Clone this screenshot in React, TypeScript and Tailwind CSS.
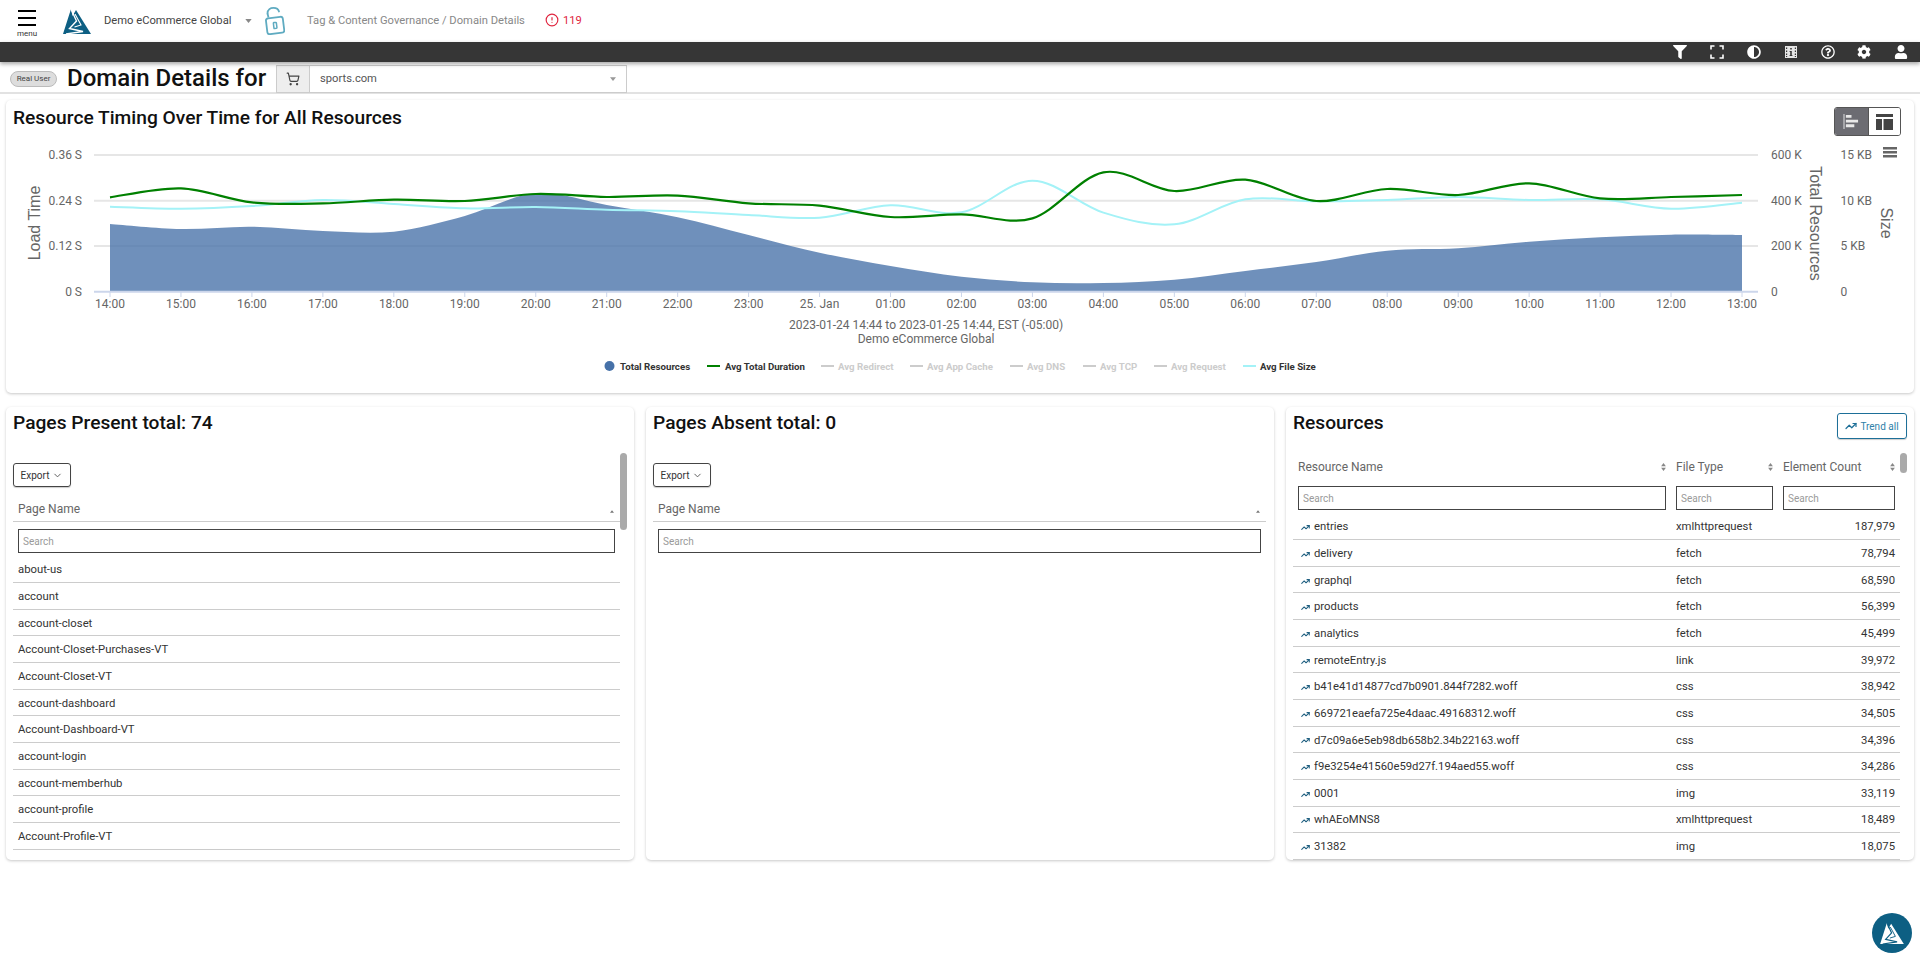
import React from "react";
import { ChevronDown, CircleAlert, ShoppingCart, TrendingUp } from "lucide-react";
import { FaFilter, FaRegQuestionCircle, FaCog, FaUser, FaAdjust } from "react-icons/fa";

const hx = (i: number) => 110 + (1632 * i) / 23;
const hy = (z: number) => 130 + z / 3;

function spline(zs: number[]) {
  const p = zs.map((z, i) => [hx(i), hy(z)]);
  let d = `M${p[0][0]} ${p[0][1]}`;
  for (let i = 0; i < p.length - 1; i++) {
    const a = p[Math.max(0, i - 1)];
    const b = p[i];
    const c = p[i + 1];
    const e = p[Math.min(p.length - 1, i + 2)];
    const k = 6;
    d += ` C${b[0] + (c[0] - a[0]) / k} ${b[1] + (c[1] - a[1]) / k} ${c[0] - (e[0] - b[0]) / k} ${c[1] - (e[1] - b[1]) / k} ${c[0]} ${c[1]}`;
  }
  return d;
}

const area = [282, 297, 290, 303, 305, 258, 190, 225, 262, 315, 368, 408, 440, 457, 459, 449, 423, 396, 362, 355, 335, 322, 314, 315];
const green = [202, 175, 217, 220, 209, 213, 192, 201, 197, 220, 227, 261, 253, 265, 127, 183, 149, 213, 177, 195, 160, 205, 201, 195];
const cyan = [230, 236, 228, 210, 222, 235, 231, 239, 244, 255, 263, 226, 247, 152, 248, 283, 208, 214, 210, 201, 210, 208, 236, 218];
const xLabels = ["14:00", "15:00", "16:00", "17:00", "18:00", "19:00", "20:00", "21:00", "22:00", "23:00", "25. Jan", "01:00", "02:00", "03:00", "04:00", "05:00", "06:00", "07:00", "08:00", "09:00", "10:00", "11:00", "12:00", "13:00"];
const grid = [155, 200.7, 246];
const leftLabels = ["0.36 S", "0.24 S", "0.12 S", "0 S"];
const midLabels = ["600 K", "400 K", "200 K", "0"];
const rightLabels = ["15 KB", "10 KB", "5 KB", "0"];
const ly = [155, 200.7, 246, 291.7];

const legend = [
  { x1: 707, x2: 720, tx: 725, t: "Avg Total Duration", c: "#008000", on: true },
  { x1: 821, x2: 834, tx: 838, t: "Avg Redirect", c: "#cccccc", on: false },
  { x1: 910, x2: 923, tx: 927, t: "Avg App Cache", c: "#cccccc", on: false },
  { x1: 1010, x2: 1023, tx: 1027, t: "Avg DNS", c: "#cccccc", on: false },
  { x1: 1083, x2: 1096, tx: 1100, t: "Avg TCP", c: "#cccccc", on: false },
  { x1: 1154, x2: 1167, tx: 1171, t: "Avg Request", c: "#cccccc", on: false },
  { x1: 1243, x2: 1256, tx: 1260, t: "Avg File Size", c: "#a4f2f7", on: true },
];

function Chart() {
  return (
    <svg viewBox="6 140 1908 253" className="block w-[1908px] h-[253px]">
      {grid.map((y) => (
        <line key={y} x1={94} x2={1758} y1={y} y2={y} stroke="#e6e6e6" strokeWidth={2} />
      ))}
      <path d={`${spline(area)} L${hx(23)} 291.7 L${hx(0)} 291.7 Z`} fill="#4671a8" fillOpacity={0.78} />
      <line x1={94} x2={1758} y1={291.7} y2={291.7} stroke="#ccd6eb" strokeWidth={2} />
      {xLabels.map((l, i) => (
        <g key={l}>
          <line x1={hx(i)} x2={hx(i)} y1={292} y2={297} stroke="#ccd6eb" />
          <text x={hx(i)} y={308} textAnchor="middle" fontSize={12} fill="#666666">{l}</text>
        </g>
      ))}
      <path d={spline(cyan)} fill="none" stroke="#a4f2f7" strokeWidth={2} />
      <path d={spline(green)} fill="none" stroke="#008000" strokeWidth={2.2} />
      {ly.map((y, i) => (
        <g key={y} fontSize={12} fill="#666666">
          <text x={82} y={y + 4} textAnchor="end">{leftLabels[i]}</text>
          <text x={1771} y={y + 4}>{midLabels[i]}</text>
          <text x={1840.5} y={y + 4}>{rightLabels[i]}</text>
        </g>
      ))}
      <g fontSize={16} fill="#666666" className="font-['Liberation_Sans',sans-serif]">
        <text transform="translate(35.5 223) rotate(-90)" textAnchor="middle" dominantBaseline="middle">Load Time</text>
        <text transform="translate(1814 223.5) rotate(90)" textAnchor="middle" dominantBaseline="middle">Total Resources</text>
        <text transform="translate(1885 223) rotate(90)" textAnchor="middle" dominantBaseline="middle">Size</text>
      </g>
      <g fill="#666666">
        <rect x={1883} y={147} width={14} height={2.5} />
        <rect x={1883} y={151} width={14} height={2.5} />
        <rect x={1883} y={155} width={14} height={2.5} />
      </g>
      <text x={926} y={329} textAnchor="middle" fontSize={12} fill="#666666">2023-01-24 14:44 to 2023-01-25 14:44, EST (-05:00)</text>
      <text x={926} y={343} textAnchor="middle" fontSize={12} fill="#666666">Demo eCommerce Global</text>
      <ellipse cx={609.5} cy={366} rx={5} ry={5} fill="#4671a8" />
      <text x={620} y={369.5} fontSize={9.7} fontWeight={700} fill="#333333">Total Resources</text>
      {legend.map((l) => (
        <g key={l.t}>
          <line x1={l.x1} x2={l.x2} y1={366} y2={366} stroke={l.c} strokeWidth={2} />
          <text x={l.tx} y={369.5} fontSize={9.7} fontWeight={700} fill={l.on ? "#333333" : "#cccccc"}>{l.t}</text>
        </g>
      ))}
    </svg>
  );
}

function Logo({ className, main, slash }: { className: string; main: string; slash: string }) {
  return (
    <svg viewBox="0 0 28 26" className={className}>
      <path d="M0 26 L8 1 L9.5 8 L13 2 L28 26 Z" fill={main} />
      <path d="M8 1 L13.5 13 L6.5 20.5 L20 23.5 L3 26" fill="none" stroke={slash} strokeWidth={1.4} />
      <path d="M12 6 L18 17 L11.5 19" fill="none" stroke={slash} strokeWidth={1.1} />
    </svg>
  );
}

function Search({ className }: { className: string }) {
  return (
    <input
      placeholder="Search"
      className={`h-[24px] border border-[#444444] rounded-none px-[4px] text-[10px] text-[#333333] placeholder:text-[#9a9a9a] outline-none bg-white ${className}`}
    />
  );
}

function SortBoth() {
  return (
    <svg viewBox="0 0 6 10" className="w-[5px] h-[8px] shrink-0">
      <path d="M3 0 L6 4 L0 4 Z M3 10 L0 6 L6 6 Z" fill="#888888" />
    </svg>
  );
}

const pages = ["about-us", "account", "account-closet", "Account-Closet-Purchases-VT", "Account-Closet-VT", "account-dashboard", "Account-Dashboard-VT", "account-login", "account-memberhub", "account-profile", "Account-Profile-VT"];

const resources: [string, string, string][] = [
  ["entries", "xmlhttprequest", "187,979"],
  ["delivery", "fetch", "78,794"],
  ["graphql", "fetch", "68,590"],
  ["products", "fetch", "56,399"],
  ["analytics", "fetch", "45,499"],
  ["remoteEntry.js", "link", "39,972"],
  ["b41e41d14877cd7b0901.844f7282.woff", "css", "38,942"],
  ["669721eaefa725e4daac.49168312.woff", "css", "34,505"],
  ["d7c09a6e5eb98db658b2.34b22163.woff", "css", "34,396"],
  ["f9e3254e41560e59d27f.194aed55.woff", "css", "34,286"],
  ["0001", "img", "33,119"],
  ["whAEoMNS8", "xmlhttprequest", "18,489"],
  ["31382", "img", "18,075"],
];

function PagesCard({ title, rows, scroll }: { title: string; rows: string[]; scroll: boolean }) {
  return (
    <div className="bg-white rounded-[5px] shadow-[0_1px_3px_rgba(0,0,0,0.22)] h-[453px] flex flex-col overflow-hidden relative">
      <div className="h-[46px] shrink-0 pl-[7px] pt-[4px] text-[19.2px] font-medium leading-[24px] text-[#111111]">{title}</div>
      <div className={scroll ? "flex-1 overflow-hidden pl-[7px] pr-[14px] pt-[10px]" : "flex-1 overflow-hidden pl-[7px] pr-[8px] pt-[10px]"}>
        <button className="h-[24px] w-[58px] border border-[#444444] rounded-[3px] flex items-center justify-center gap-[3px] text-[10px] text-[#333333] shadow-[0_1px_1px_rgba(0,0,0,0.2)]">
          Export <ChevronDown size={11} color="#555555" />
        </button>
        <div className="h-[35px] flex items-end justify-between px-[5px] pb-[5px] border-b border-[#cccccc] text-[12px] text-[#666666] leading-[14px]">
          <span>Page Name</span>
          <svg viewBox="0 0 6 4" className="w-[4px] h-[3px] mb-[3px] mr-[1px]"><path d="M3 0 L6 4 L0 4 Z" fill="#777777" /></svg>
        </div>
        <div className="h-[34.4px] pt-[5.5px] px-[5px]">
          <Search className="w-full" />
        </div>
        {rows.map((r) => (
          <div key={r} className="h-[26.67px] flex items-center px-[5px] pt-[3px] border-b border-[#cccccc] text-[11.3px] text-[#333333]">{r}</div>
        ))}
      </div>
      {scroll && <div className="absolute left-[614px] top-[46px] w-[7px] h-[77px] rounded-[4px] bg-[#aaaaaa]" />}
    </div>
  );
}

function ResourcesCard() {
  return (
    <div className="bg-white rounded-[5px] shadow-[0_1px_3px_rgba(0,0,0,0.22)] h-[453px] flex flex-col overflow-hidden relative">
      <div className="h-[46px] shrink-0 pl-[7px] pr-[7px] pt-[4px] flex items-start justify-between">
        <span className="text-[19.2px] font-medium leading-[24px] text-[#111111]">Resources</span>
        <button className="mt-[2px] h-[26px] w-[70px] border border-[#1d6f98] rounded-[3px] flex items-center justify-center gap-[3px] text-[10px] text-[#2f7fa8] shadow-[0_1px_1px_rgba(0,0,0,0.2)]">
          <TrendingUp size={12} color="#1d6f98" strokeWidth={2.4} /> Trend all
        </button>
      </div>
      <div className="flex-1 overflow-hidden pl-[7px]">
        <div className="grid grid-cols-[378px_107px_122px] h-[27px] items-center text-[12px] text-[#666666]">
          <div className="flex items-center justify-between px-[5px]"><span>Resource Name</span><SortBoth /></div>
          <div className="flex items-center justify-between px-[5px]"><span>File Type</span><SortBoth /></div>
          <div className="flex items-center justify-between px-[5px]"><span>Element Count</span><SortBoth /></div>
        </div>
        <div className="grid grid-cols-[378px_107px_122px] h-[33.4px] pt-[4.5px]">
          <div className="px-[5px]"><Search className="w-full" /></div>
          <div className="px-[5px]"><Search className="w-full" /></div>
          <div className="px-[5px]"><Search className="w-full" /></div>
        </div>
        {resources.map((r) => (
          <div key={r[0]} className="grid grid-cols-[378px_107px_122px] w-[607px] h-[26.67px] items-center pt-[3px] border-b border-[#cccccc] text-[11.3px] text-[#333333]">
            <div className="flex items-center gap-[4px] pl-[8px]"><TrendingUp size={9} color="#1f5f80" strokeWidth={2.8} /><span>{r[0]}</span></div>
            <div className="px-[5px]">{r[1]}</div>
            <div className="px-[5px] text-right">{r[2]}</div>
          </div>
        ))}
      </div>
      <div className="absolute left-[614px] top-[46px] w-[7px] h-[20px] rounded-[4px] bg-[#aaaaaa]" />
    </div>
  );
}

export default function App() {
  return (
    <div className="w-[1920px] h-[961px] overflow-hidden bg-white font-['Roboto',sans-serif] relative">
      <header className="h-[42px] flex items-center">
        <div className="w-[18px] shrink-0" />
        <div className="w-[18px] h-[42px] shrink-0 flex flex-col items-center pt-[10px] relative">
          <div className="w-[18px] h-[2px] bg-black shrink-0" />
          <div className="w-[18px] h-[2px] bg-black mt-[5px] shrink-0" />
          <div className="w-[18px] h-[2px] bg-black mt-[5px] shrink-0" />
          <span className="text-[8px] leading-[9px] mt-[3px] text-[#333333]">menu</span>
        </div>
        <div className="ml-[27px] w-[28px] h-[26px] shrink-0">
          <Logo className="w-[28px] h-[26px]" main="#0d5f83" slash="#ffffff" />
        </div>
        <span className="ml-[13px] w-[128px] shrink-0 text-[11.2px] text-[#444444] whitespace-nowrap">Demo eCommerce Global</span>
        <svg viewBox="0 0 8 5" className="ml-[13px] w-[7px] h-[4px] shrink-0"><path d="M0 0 L8 0 L4 5 Z" fill="#888888" /></svg>
        <svg viewBox="0 0 20 28" fill="none" stroke="#5fabc1" strokeWidth={1.8} className="ml-[13px] w-[20px] h-[28px] shrink-0">
          <path d="M2.5 6.5 C2.5 2.5 5.5 0.9 8.5 0.9 C11.5 0.9 13.5 2.5 14 4.5" strokeLinecap="round" />
          <path d="M2.5 6.5 L3.5 10.5" />
          <rect x="1.6" y="10.5" width="17" height="16" rx="2.4" transform="rotate(-7 10 18.5)" />
          <rect x="8.6" y="15.5" width="3" height="6" rx="0.6" transform="rotate(-7 10 18)" strokeWidth={1.5} />
        </svg>
        <span className="ml-[22px] w-[219px] shrink-0 text-[11.2px] text-[#888888] whitespace-nowrap">Tag &amp; Content Governance / Domain Details</span>
        <CircleAlert size={14} color="#e0253f" className="ml-[19px] shrink-0 -mt-[2px]" />
        <span className="ml-[4px] text-[11.2px] text-[#e0253f]">119</span>
      </header>

      <div className="h-[20px] bg-[#363636] shadow-[0_2px_4px_rgba(0,0,0,0.35)] relative flex items-center justify-end pr-[12px] gap-[22px] text-white">
        <FaFilter size={14} className="shrink-0" />
        <svg viewBox="0 0 14 14" fill="none" stroke="white" strokeWidth={1.6} className="w-[14px] h-[14px] shrink-0 ml-[1px]">
          <path d="M1 4.5 V1 H4.5 M9.5 1 H13 V4.5 M13 9.5 V13 H9.5 M4.5 13 H1 V9.5" />
        </svg>
        <FaAdjust size={14} className="shrink-0 ml-[1px]" />
        <svg viewBox="0 0 14 14" className="w-[14px] h-[14px] shrink-0 ml-[1px]">
          <path fillRule="evenodd" d="M1 1 H13 V13 H1 Z M2 2.5 V4 H3.2 V2.5 Z M2 5.5 V7 H3.2 V5.5 Z M2 8.5 V10 H3.2 V8.5 Z M2 11 V12 H3.2 V11 Z M10.8 2.5 V4 H12 V2.5 Z M10.8 5.5 V7 H12 V5.5 Z M10.8 8.5 V10 H12 V8.5 Z M10.8 11 V12 H12 V11 Z M6.2 3 V4.6 H7.8 V3 Z M5.6 6 V7 H6.2 V10 H5.6 V11 H8.4 V10 H7.8 V6 Z" fill="#e6e6e6" />
        </svg>
        <FaRegQuestionCircle size={14} className="shrink-0 ml-[1px]" />
        <FaCog size={14} className="shrink-0" />
        <FaUser size={14} className="shrink-0 ml-[1px]" />
      </div>

      <div className="h-[32px] border-b-2 border-[#e2e2e2] flex items-start pl-[10px]">
        <div className="mt-[9px] w-[47px] h-[16px] rounded-full bg-[#dddddd] border border-[#bbbbbb] flex items-center justify-center text-[8px] text-[#444444] shrink-0">Real User</div>
        <h1 className="ml-[10px] w-[199px] shrink-0 text-[24px] font-medium leading-[31px] pt-[1px] text-[#111111] whitespace-nowrap">Domain Details for</h1>
        <div className="ml-[10px] mt-[3px] w-[351px] h-[28px] border border-[#cccccc] flex items-center shrink-0 bg-white">
          <div className="w-[33px] h-full bg-[#eeeeee] border-r border-[#cccccc] flex items-center justify-center">
            <ShoppingCart size={14} color="#444444" />
          </div>
          <span className="ml-[10px] flex-1 text-[11.2px] text-[#555555]">sports.com</span>
          <svg viewBox="0 0 8 5" className="mr-[10px] w-[6px] h-[4px]"><path d="M0 0 L8 0 L4 5 Z" fill="#999999" /></svg>
        </div>
      </div>

      <main className="px-[6px] pt-[6px]">
        <section className="relative bg-white rounded-[5px] shadow-[0_1px_3px_rgba(0,0,0,0.22)] h-[293px] overflow-hidden">
          <div className="h-[40px] pl-[7px] pt-[6px] text-[19.2px] font-medium leading-[24px] text-[#111111]">Resource Timing Over Time for All Resources</div>
          <div className="absolute top-[7px] right-[13px] w-[67px] h-[29px] flex rounded-[3px] overflow-hidden border border-[#555555]">
            <div className="w-[33px] bg-[#6c6c72] flex items-center justify-center">
              <svg viewBox="0 0 18 16" className="w-[17px] h-[15px]"><path d="M0.5 0 H1.5 V16 H0.5 Z M3 1 H9 V4 H3 Z M3 6 H16 V9 H3 Z M3 11 H12 V14 H3 Z" fill="#e8e8e8" /></svg>
            </div>
            <div className="flex-1 bg-white flex items-center justify-center border-l border-[#555555]">
              <svg viewBox="0 0 17 16" className="w-[17px] h-[16px]"><path d="M0 0 H17 V3 H0 Z M0 5 H6 V16 H0 Z M7.5 5 H17 V16 H7.5 Z" fill="#444444" /></svg>
            </div>
          </div>
          <Chart />
        </section>

        <div className="grid grid-cols-3 gap-[12px] mt-[14px]">
          <PagesCard title="Pages Present total: 74" rows={pages} scroll />
          <PagesCard title="Pages Absent total: 0" rows={[]} scroll={false} />
          <ResourcesCard />
        </div>
      </main>

      <div className="fixed right-[8px] bottom-[8px] w-[40px] h-[40px] rounded-full bg-[#0d5f83] flex items-center justify-center">
        <Logo className="w-[24px] h-[22px]" main="#ffffff" slash="#0d5f83" />
      </div>
    </div>
  );
}
